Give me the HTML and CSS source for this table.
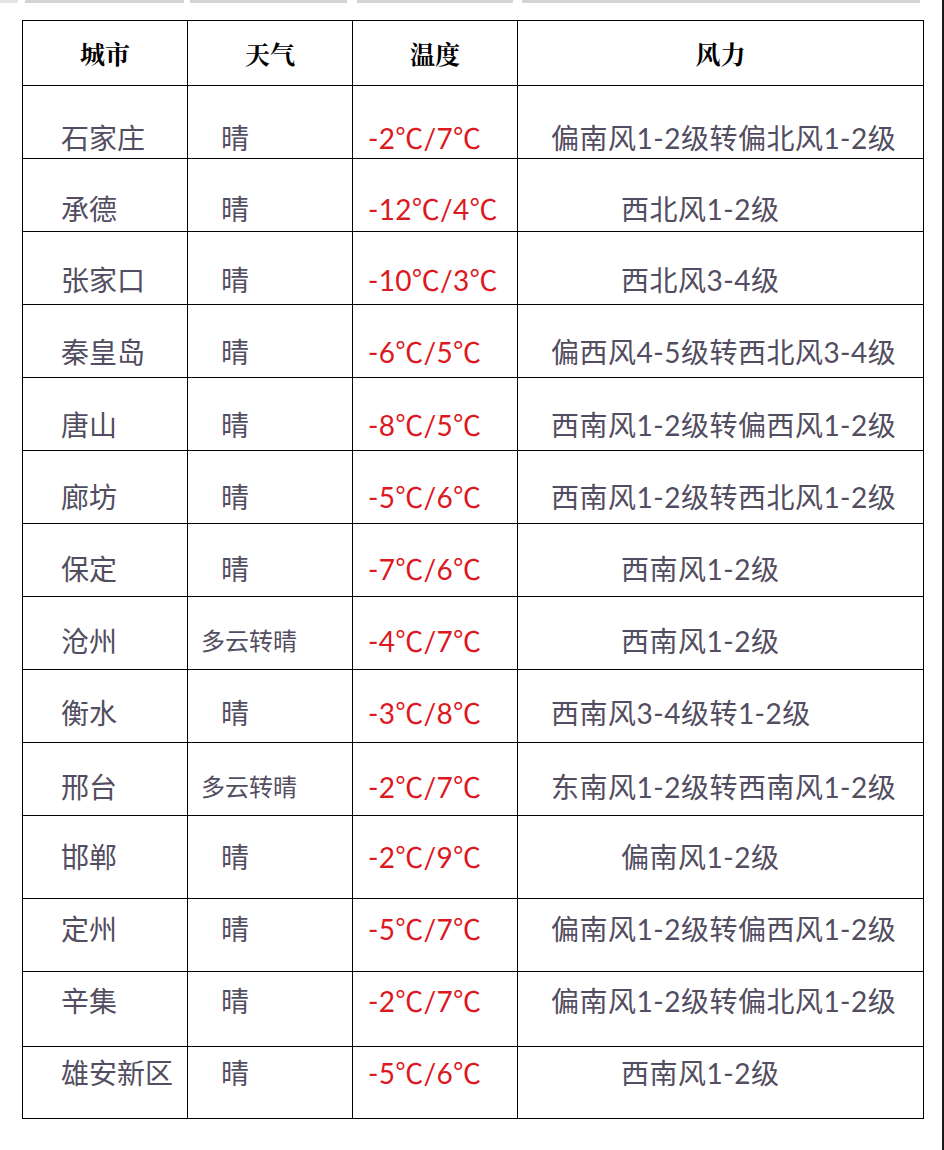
FILE: index.html
```html
<!DOCTYPE html>
<html lang="zh-CN">
<head>
<meta charset="utf-8">
<title>河北天气</title>
<link rel="stylesheet" href="styles.css">
</head>
<body>
<div class="page">
  <div class="topbars">
    <span class="b0"></span><span class="b1"></span><span class="b2"></span><span class="b3"></span><span class="b4"></span>
  </div>
  <table class="weather">
    <colgroup>
      <col class="c1"><col class="c2"><col class="c3"><col class="c4">
    </colgroup>
    <thead>
      <tr><th>城市</th><th>天气</th><th>温度</th><th>风力</th></tr>
    </thead>
    <tbody>
      <tr><td class="city">石家庄</td><td class="wx">晴</td><td class="temp">-2℃/7℃</td><td class="wind">偏南风1-2级转偏北风1-2级</td></tr>
      <tr><td class="city">承德</td><td class="wx">晴</td><td class="temp">-12℃/4℃</td><td class="wind in">西北风1-2级</td></tr>
      <tr><td class="city">张家口</td><td class="wx">晴</td><td class="temp">-10℃/3℃</td><td class="wind in">西北风3-4级</td></tr>
      <tr><td class="city">秦皇岛</td><td class="wx">晴</td><td class="temp">-6℃/5℃</td><td class="wind">偏西风4-5级转西北风3-4级</td></tr>
      <tr><td class="city">唐山</td><td class="wx">晴</td><td class="temp">-8℃/5℃</td><td class="wind">西南风1-2级转偏西风1-2级</td></tr>
      <tr><td class="city">廊坊</td><td class="wx">晴</td><td class="temp">-5℃/6℃</td><td class="wind">西南风1-2级转西北风1-2级</td></tr>
      <tr><td class="city">保定</td><td class="wx">晴</td><td class="temp">-7℃/6℃</td><td class="wind in">西南风1-2级</td></tr>
      <tr><td class="city">沧州</td><td class="wx small">多云转晴</td><td class="temp">-4℃/7℃</td><td class="wind in">西南风1-2级</td></tr>
      <tr><td class="city">衡水</td><td class="wx">晴</td><td class="temp">-3℃/8℃</td><td class="wind">西南风3-4级转1-2级</td></tr>
      <tr><td class="city">邢台</td><td class="wx small">多云转晴</td><td class="temp">-2℃/7℃</td><td class="wind">东南风1-2级转西南风1-2级</td></tr>
      <tr><td class="city">邯郸</td><td class="wx">晴</td><td class="temp">-2℃/9℃</td><td class="wind in">偏南风1-2级</td></tr>
      <tr><td class="city">定州</td><td class="wx">晴</td><td class="temp">-5℃/7℃</td><td class="wind">偏南风1-2级转偏西风1-2级</td></tr>
      <tr><td class="city">辛集</td><td class="wx">晴</td><td class="temp">-2℃/7℃</td><td class="wind">偏南风1-2级转偏北风1-2级</td></tr>
      <tr><td class="city">雄安新区</td><td class="wx">晴</td><td class="temp">-5℃/6℃</td><td class="wind in">西南风1-2级</td></tr>
    </tbody>
  </table>
</div>
</body>
</html>
```

FILE: styles.css
```css
html, body {
  margin: 0;
  padding: 0;
  background: #ffffff;
}

.page {
  width: 944px;
  height: 1150px;
  box-sizing: border-box;
  border-right: 2px solid #1a1a1a;
  background: #ffffff;
  overflow: hidden;
}

.topbars {
  display: flex;
  height: 3px;
}

.topbars span {
  display: block;
  height: 3px;
  background: #d4d4d6;
}

.topbars .b0 { width: 18px; background: #e4e4e6; }
.topbars .b1 { width: 159px; margin-left: 7px; }
.topbars .b2 { width: 157px; margin-left: 6px; }
.topbars .b3 { width: 156px; margin-left: 10px; }
.topbars .b4 { width: 398px; margin-left: 9px; }

.weather {
  margin: 17px 0 0 22px;
  width: 901px;
  border-collapse: collapse;
  table-layout: fixed;
  font-family: "Lato", "Noto Sans CJK SC", sans-serif;
}

.weather col.c1 { width: 165px; }
.weather col.c2 { width: 165px; }
.weather col.c3 { width: 165px; }
.weather col.c4 { width: 406px; }

.weather th,
.weather td {
  border: 1px solid #000;
  padding: 0;
}

.weather th {
  height: 64px;
  font-family: "Noto Serif CJK SC", "Noto Sans CJK SC", serif;
  font-weight: 700;
  font-size: 25px;
  color: #000;
  text-align: center;
  vertical-align: middle;
}

.weather td {
  vertical-align: top;
  font-size: 28px;
  line-height: 32px;
  color: #524d60;
  height: 73px;
  box-sizing: border-box;
  white-space: nowrap;
}

.weather td.city { padding-left: 38px; }
.weather td.wx { padding-left: 33px; }
.weather td.wx.small { padding-left: 13px; font-size: 24px; }
.weather td.temp { padding-left: 15px; color: #dc1820; letter-spacing: 0.3px; }
.weather td.wind { padding-left: 33px; letter-spacing: 0.5px; }
.weather td.wind.in { padding-left: 103px; }

.weather tbody tr:nth-child(1) td { padding-top: 36px; }
.weather tbody tr:nth-child(2) td { padding-top: 34px; }
.weather tbody tr:nth-child(3) td { padding-top: 32px; }
.weather tbody tr:nth-child(4) td { padding-top: 31px; }
.weather tbody tr:nth-child(5) td { padding-top: 31px; }
.weather tbody tr:nth-child(6) td { padding-top: 30px; }
.weather tbody tr:nth-child(7) td { padding-top: 29px; }
.weather tbody tr:nth-child(8) td { padding-top: 28px; }
.weather tbody tr:nth-child(9) td { padding-top: 27px; }
.weather tbody tr:nth-child(10) td { padding-top: 28px; }
.weather tbody tr:nth-child(11) td { padding-top: 25px; height: 83px; }
.weather tbody tr:nth-child(12) td { padding-top: 14px; }
.weather tbody tr:nth-child(13) td { padding-top: 13px; height: 75px; }
.weather tbody tr:nth-child(14) td { padding-top: 10px; height: 72px; }
```
